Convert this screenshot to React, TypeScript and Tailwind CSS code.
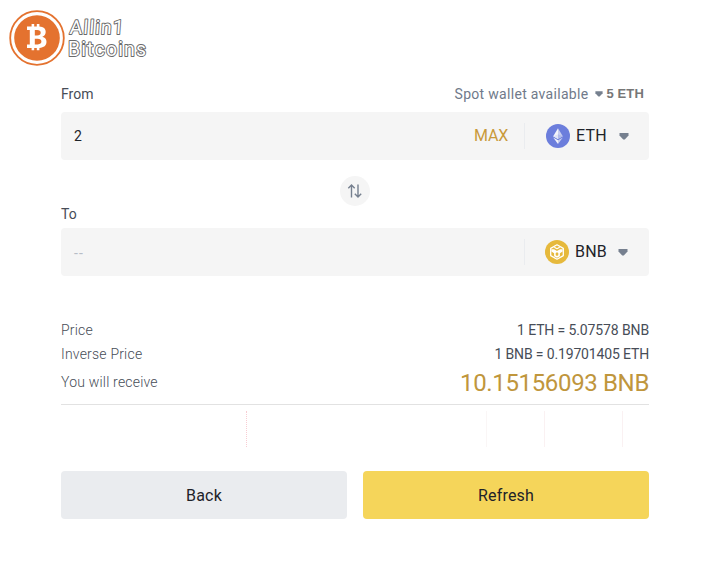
import React from 'react';

interface TokenProps {
  symbol: string;
  icon: React.ReactNode;
  className: string;
}

interface PriceRowProps {
  label: string;
  value: string;
  valueClass: string;
}

const font = "font-['Roboto','Liberation_Sans',sans-serif]";

const Caret = ({ className }: { className: string }) => (
  <svg viewBox="0 0 10 7" className={className} fill="#76808f">
    <path d="M.5 0h9v2.6L5.8 6.5H4.2L.5 2.6z" />
  </svg>
);

const EthIcon = () => (
  <svg viewBox="0 0 24 24" className="size-6">
    <circle cx="12" cy="12" r="12" fill="#6c7edc" />
    <path d="M12 4.2 7.2 12.3 12 15.1z" fill="#f4f5fb" />
    <path d="M12 4.2l4.8 8.1-4.8 2.8z" fill="#c9cff0" />
    <path d="M7.2 12.3 12 10.2v4.9z" fill="#e0e4f6" />
    <path d="M16.8 12.3 12 10.2v4.9z" fill="#b3bcea" />
    <path d="M7.2 13.4 12 16.2V20z" fill="#f4f5fb" />
    <path d="M16.8 13.4 12 16.2V20z" fill="#c9cff0" />
  </svg>
);

const BnbIcon = () => (
  <svg viewBox="0 0 24 24" className="size-6">
    <circle cx="12" cy="12" r="12" fill="#e6b93c" />
    <g fill="none" stroke="#fff" strokeWidth="1.3" strokeLinejoin="round">
      <path d="M12 4.8l6.3 3.6v7.2L12 19.2l-6.3-3.6V8.4z" />
      <path d="M9.3 7.2 12 8.7l2.7-1.5" />
    </g>
    <path d="m6.4 9.2 2.6 0 3 1.8 3-1.8 2.6 0v2.4l-2.7 1.6v3L12 17.8l-2.9-1.6v-3l-2.7-1.6z" fill="#fff" />
    <path d="M10.7 12.9 12 12.2l1.3.7v2.4l-1.3.8-1.3-.8z" fill="#e6b93c" />
  </svg>
);

const Logo = () => (
  <div className="flex pl-[9px] pt-[10px]">
    <svg viewBox="0 0 56 56" className="size-14">
      <circle cx="28" cy="28" r="26.8" fill="#fff" stroke="#e4722f" strokeWidth="1.8" />
      <circle cx="28" cy="28" r="22.8" fill="#e4722f" />
      <path
        fill="#fff"
        fillRule="evenodd"
        d="M18 16.5h4.6V14h2.6v2.5h2.6V14h2.6v2.6c4 .3 6.3 2.2 6.3 5.4 0 2.3-1.2 4-3.4 4.8 2.7.6 4.2 2.4 4.2 5 0 3.8-2.6 5.9-7.1 6.1v2.4h-2.6V38h-2.6v2.3h-2.6V38H18v-3.6h2.8V20.1H18zm7.8 3.6v5.3h2.3c2.4 0 3.6-.9 3.6-2.7 0-1.7-1.2-2.6-3.5-2.6zm0 8.7v5.6h2.9c2.5 0 3.7-1 3.7-2.8 0-1.9-1.3-2.8-3.9-2.8z"
      />
    </svg>
    <svg viewBox="0 0 82 56" className="ml-[1px] h-14 w-[82px]" fill="#fff" stroke="#6a6a6a" strokeWidth="1.9" strokeLinejoin="round" paintOrder="stroke">
      <text x="5" y="24" fontSize="19.5" transform="skewX(-4)" textLength="54" className={font}>Allin1</text>
      <text x="2" y="46" fontSize="19.5" textLength="78" className={font}>Bitcoins</text>
    </svg>
  </div>
);

function TokenSelect({ symbol, icon, className }: TokenProps) {
  return (
    <div className="flex h-[26px] w-[125px] items-center border-l border-[#eaecef]">
      <div className={`flex items-center ${className}`}>
        {icon}
        <span className="ml-1.5 w-[43px] text-[16px] tracking-[0.2px] text-[#1e2329]">{symbol}</span>
        <Caret className="h-[7px] w-[10px]" />
      </div>
    </div>
  );
}

function PriceRow({ label, value, valueClass }: PriceRowProps) {
  return (
    <div className="flex h-6 items-center justify-between text-[14px] text-[#474d57]">
      <span className="font-light tracking-[0.2px]">{label}</span>
      <span className={valueClass}>{value}</span>
    </div>
  );
}

export default function App() {
  return (
    <div className={`h-[567px] w-[726px] bg-white ${font}`}>
      <Logo />
      <main className="ml-[61px] w-[588px] pt-[18px]">
        <div className="flex h-5 items-center justify-between text-[14px]">
          <span className="text-[#474d57]">From</span>
          <div className="flex items-center pr-[5px]">
            <span className="tracking-[0.3px] text-[#707a8a]">Spot wallet available</span>
            <Caret className="ml-[7px] h-[6px] w-[8px]" />
            <span className="ml-[3px] font-['Liberation_Sans',sans-serif] text-[13px] font-bold tracking-[0.15px] text-[#777]">5 ETH</span>
          </div>
        </div>

        <div className="mt-2 flex h-12 items-center rounded bg-[#f5f5f5]">
          <span className="flex-1 pl-[13px] text-[14px] text-[#1e2329]">2</span>
          <span className="pr-4 text-[16px] tracking-[-0.2px] text-[#c99a3b]">MAX</span>
          <TokenSelect symbol="ETH" icon={<EthIcon />} className="pl-[21px]" />
        </div>

        <div className="mx-auto mt-4 flex size-[30px] items-center justify-center rounded-full bg-[#f5f5f5]">
          <svg viewBox="0 0 16 16" className="size-4" fill="none" stroke="#76808f" strokeWidth="1.4">
            <path d="M4.5 14.5V2M1.3 5.2l3.2-3.3 3.2 3.3M11 1.5V14M7.8 10.8l3.2 3.3 3.2-3.3" />
          </svg>
        </div>

        <div className="-mt-0.5 flex h-5 items-center text-[14px] text-[#474d57]">To</div>
        <div className="mt-1 flex h-12 items-center rounded bg-[#f5f5f5]">
          <span className="flex-1 pl-[13px] pt-0.5 text-[14px] tracking-[1.2px] text-[#b7bdc6]">--</span>
          <TokenSelect symbol="BNB" icon={<BnbIcon />} className="pl-5" />
        </div>

        <div className="mt-[42px]">
          <PriceRow label="Price" value="1 ETH = 5.07578 BNB" valueClass="tracking-[-0.12px]" />
          <PriceRow label="Inverse Price" value="1 BNB = 0.19701405 ETH" valueClass="tracking-[-0.15px]" />
          <div className="flex h-[39px] items-center justify-between border-b border-[#e2e2e2] pb-[5px]">
            <span className="text-[14px] font-light tracking-[0.2px] text-[#474d57]">You will receive</span>
            <span className="text-[24px] tracking-[-0.35px] text-[#c0963c]">10.15156093 BNB</span>
          </div>
        </div>

        <div className="mt-1.5 flex h-9 pl-[185px]">
          <div className="w-[240px] border-l border-dotted border-[#f8cdd3]" />
          <div className="w-[58px] border-l border-[#faf6f6]" />
          <div className="w-[78px] border-l border-[#faf1f2]" />
          <div className="border-l border-[#faf1f2]" />
        </div>

        <div className="mt-6 flex gap-4">
          <button className="h-12 flex-1 rounded bg-[#eaecef] pt-0.5 text-[16px] tracking-[0.2px] text-[#1e2329]">Back</button>
          <button className="h-12 flex-1 rounded bg-[#f5d55a] pt-0.5 text-[16px] tracking-[0.2px] text-[#1e2329]">Refresh</button>
        </div>
      </main>
    </div>
  );
}
